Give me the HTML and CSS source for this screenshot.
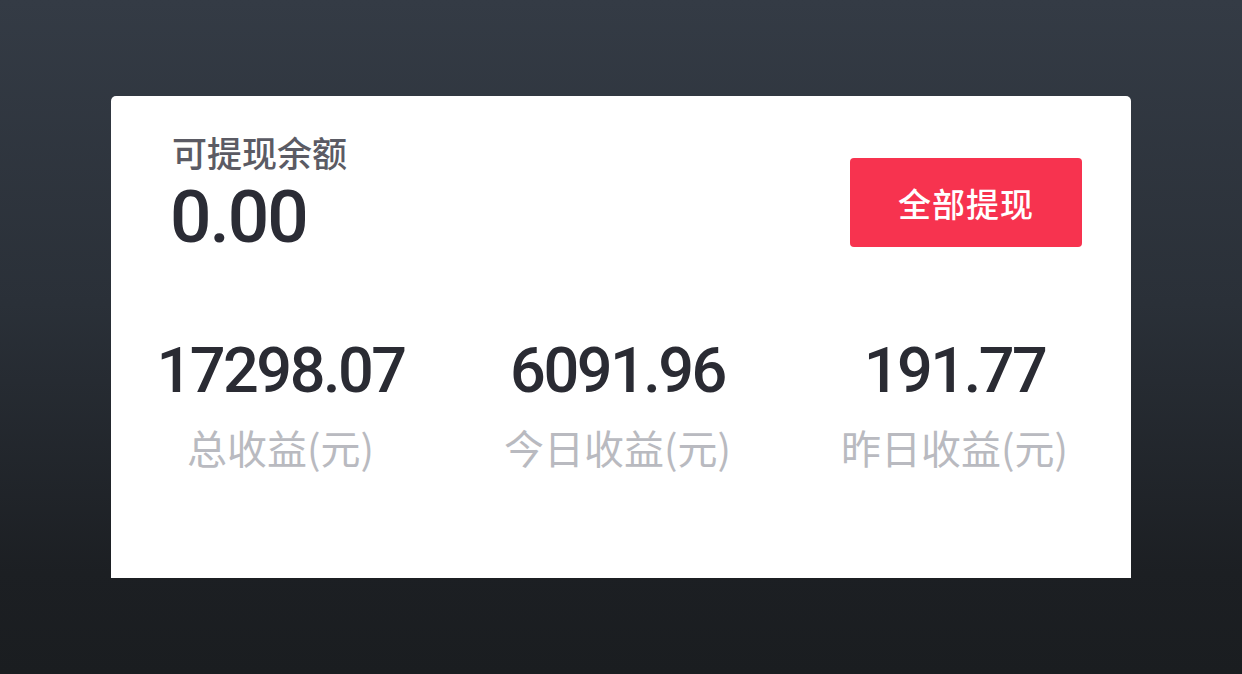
FILE: index.html
```html
<!DOCTYPE html>
<html lang="zh">
<head>
<meta charset="utf-8">
<link rel="stylesheet" href="styles.css">
</head>
<body>
<div class="card">
  <div class="head">
    <div class="balance">
      <div class="balance-label">可提现余额</div>
      <div class="balance-value">0.00</div>
    </div>
    <button class="withdraw">全部提现</button>
  </div>
  <div class="stats">
    <div class="stat">
      <div class="stat-value">17298.07</div>
      <div class="stat-label">总收益(元)</div>
    </div>
    <div class="stat">
      <div class="stat-value">6091.96</div>
      <div class="stat-label">今日收益(元)</div>
    </div>
    <div class="stat">
      <div class="stat-value">191.77</div>
      <div class="stat-label">昨日收益(元)</div>
    </div>
  </div>
</div>
</body>
</html>
```
FILE: styles.css
```css
html, body {
  margin: 0;
  padding: 0;
}
body {
  width: 1242px;
  height: 674px;
  overflow: hidden;
  background: linear-gradient(180deg, #343b45 0%, #2a3038 45%, #1c1f23 85%, #1a1d20 100%);
  font-family: "Noto Sans CJK SC", "Noto Sans", sans-serif;
  padding-top: 96px;
  box-sizing: border-box;
}
.card {
  margin-left: 111px;
  width: 1020px;
  height: 482px;
  background: #ffffff;
  border-radius: 5px 5px 0 0;
  box-sizing: border-box;
}
.head {
  display: flex;
  justify-content: space-between;
  align-items: flex-start;
  padding: 36px 49px 0 61px;
}
.balance-label {
  font-size: 35px;
  line-height: 40px;
  color: #5b5b64;
  font-weight: 500;
}
.balance-value {
  margin-top: 5px;
  font-family: Roboto, "Noto Sans", sans-serif;
  font-size: 73px;
  line-height: 80px;
  letter-spacing: -2px;
  color: #2b2c35;
  font-weight: 500;
  margin-left: -2px;
}
.withdraw {
  margin-top: 26px;
  width: 232px;
  height: 89px;
  border: none;
  border-radius: 4px;
  background: #f7334f;
  color: #ffffff;
  font-family: "Noto Sans CJK SC", sans-serif;
  font-size: 33px;
  font-weight: 500;
  letter-spacing: 1px;
  padding: 0;
}
.stats {
  display: grid;
  grid-template-columns: 337px 337px 337px;
  padding-left: 1px;
  margin-top: 79px;
}
.stat {
  display: flex;
  flex-direction: column;
  align-items: center;
}
.stat-value {
  font-family: Roboto, "Noto Sans", sans-serif;
  font-size: 63px;
  line-height: 70px;
  letter-spacing: -2.5px;
  color: #2a2b33;
  font-weight: 500;
}
.stat-label {
  margin-top: 16px;
  font-size: 40px;
  line-height: 50px;
  color: #b9bac0;
}
```
